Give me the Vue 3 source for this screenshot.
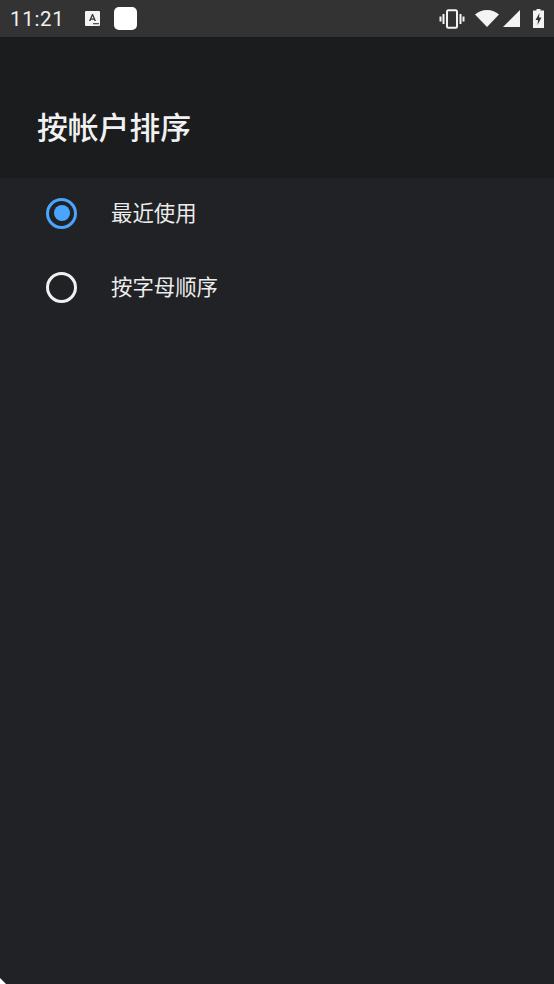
<script setup>
import { ref } from 'vue';

const options = [
    { id: 'recent', label: '最近使用' },
    { id: 'alpha', label: '按字母顺序' }
];

const selected = ref('recent');
</script>
<template>
    <div class="screen">
        <div class="status-bar">
            <span class="clock">11:21</span>
            <svg class="ic-a" viewBox="0 0 15 15">
                <rect width="15" height="15" rx="1" fill="#f4f4f4" />
                <path d="M4 10 L7 3 L8 3 L11 10 L9.500 10 L7.500 5 L5.500 10 Z M5.500 7.500 H9.500 V8.700 H5.500 Z" fill="#333" />
                <rect x="8" y="12" width="6" height="1.300" fill="#555" />
            </svg>
            <span class="app-badge"></span>
            <span class="spacer"></span>
            <svg class="ic-vibrate" viewBox="0 0 26 20">
                <rect x="8" y="1.200" width="10" height="17.600" rx="1.500" fill="none" stroke="#f4f4f4" stroke-width="2" />
                <rect x="3.500" y="5" width="2" height="10" fill="#f4f4f4" />
                <rect x="20.500" y="5" width="2" height="10" fill="#f4f4f4" />
                <rect x="0.500" y="7.500" width="2" height="5" fill="#f4f4f4" />
                <rect x="23.500" y="7.500" width="2" height="5" fill="#f4f4f4" />
            </svg>
            <svg class="ic-wifi" viewBox="0 0 24 17">
                <path d="M0 4.500 C3 1.800 7.300 0 12 0 C16.700 0 21 1.800 24 4.500 L12 17 Z" fill="#f4f4f4" />
            </svg>
            <svg class="ic-signal" viewBox="0 0 17 17">
                <path d="M0 17 L17 0 V17 Z" fill="#f4f4f4" />
            </svg>
            <svg class="ic-battery" viewBox="0 0 11 19">
                <path fill-rule="evenodd" d="M3.500 0 H7.500 V1.500 H11 V19 H0 V1.500 H3.500 Z M6.500 4 L2.500 11 H5 L4.500 16 L8.500 8.500 H6 Z" fill="#f4f4f4" />
            </svg>
        </div>
        <header class="title-bar">
            <h1>按帐户排序</h1>
        </header>
        <ul class="options">
            <li v-for="option in options" :key="option.id" class="option" @click="selected = option.id">
                <span class="radio" :class="{ checked: selected === option.id }"></span>
                <span class="label" v-text="option.label"></span>
            </li>
        </ul>
        <span class="corner"></span>
    </div>
</template>

<style>
html, body {
    margin: 0;
    background: #202226;
}
</style>

<style scoped>
.screen {
    position: relative;
    display: flex;
    flex-direction: column;
    width: 554px;
    height: 984px;
    overflow: hidden;
    background: #202226;
    font-family: Roboto, "Noto Sans CJK SC", sans-serif;
}
.status-bar {
    display: flex;
    align-items: center;
    flex: none;
    height: 37px;
    padding: 0 10px 0 10px;
    box-sizing: border-box;
    background: #333333;
}
.clock {
    width: 75px;
    color: #f0f0f0;
    font-size: 20.5px;
    letter-spacing: 0.7px;
}
.ic-a {
    width: 15px;
    height: 15px;
    margin-right: 14px;
}
.app-badge {
    width: 23px;
    height: 23px;
    border-radius: 5px;
    background: #ffffff;
}
.spacer {
    flex: 1;
}
.ic-vibrate {
    width: 26px;
    height: 20px;
    margin-right: 10px;
}
.ic-wifi {
    width: 24px;
    height: 17px;
    margin-right: 4px;
}
.ic-signal {
    width: 17px;
    height: 17px;
    margin-right: 13px;
}
.ic-battery {
    width: 11px;
    height: 19px;
}
.title-bar {
    display: flex;
    align-items: center;
    flex: none;
    height: 141px;
    padding: 36px 37px 0;
    box-sizing: border-box;
    background: #1a1c1e;
}
.title-bar h1 {
    margin: 0;
    color: #f1f1f1;
    font-size: 30.8px;
    font-weight: 500;
}
.options {
    margin: 0;
    padding: 0;
    list-style: none;
}
.option {
    display: flex;
    align-items: center;
    height: 74px;
    padding: 0 0 4px 46px;
    box-sizing: border-box;
}
.radio {
    position: relative;
    flex: none;
    width: 31px;
    height: 31px;
    margin-right: 34px;
    border: 3px solid #f0f0f0;
    border-radius: 50%;
    box-sizing: border-box;
}
.radio.checked {
    border-color: #4aa5ff;
}
.radio.checked::after {
    content: '';
    position: absolute;
    inset: 4.5px;
    border-radius: 50%;
    background: #4aa5ff;
}
.label {
    color: #ececec;
    font-size: 21.4px;
    line-height: 28px;
    margin-top: 2px;
}
.corner {
    position: absolute;
    left: 0;
    bottom: 0;
    width: 6px;
    height: 6px;
    background: #ffffff;
    clip-path: polygon(0 0, 100% 100%, 0 100%);
}
</style>
